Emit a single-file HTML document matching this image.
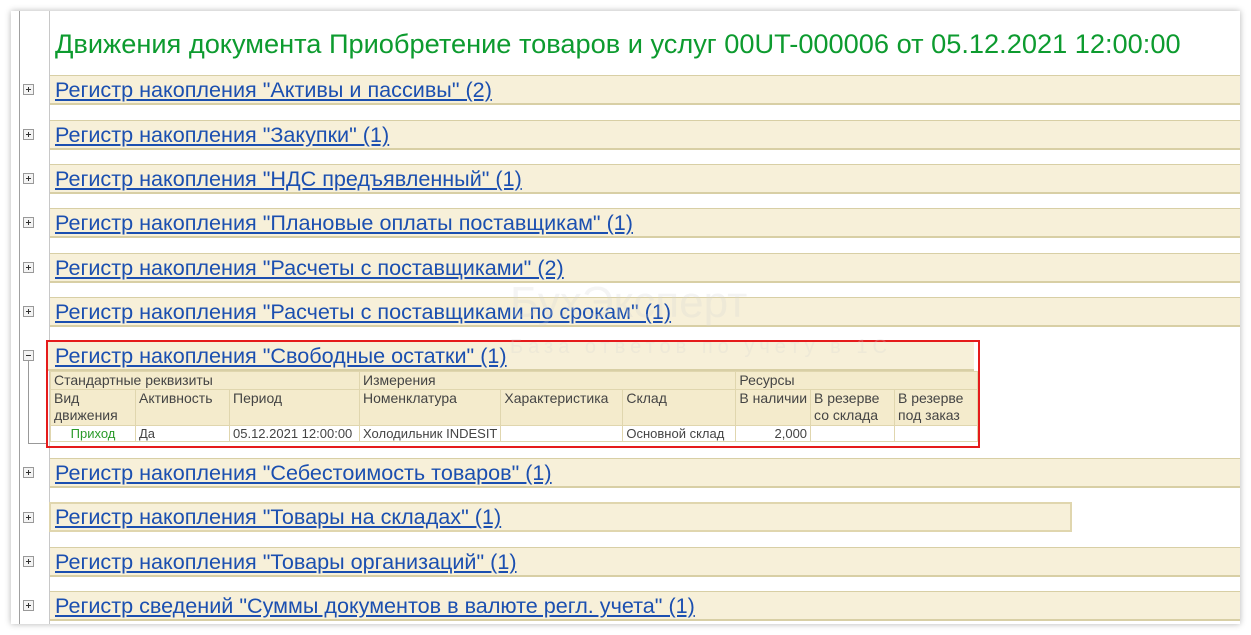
<!DOCTYPE html>
<html><head><meta charset="utf-8"><style>
body{margin:0;width:1251px;height:635px;background:#fff;position:relative;overflow:hidden;font-family:"Liberation Sans",Arial,sans-serif}
.frame{position:absolute;left:11px;top:11px;width:1229px;height:613px;background:#fff;box-shadow:0 0 6px rgba(0,0,0,.3)}
.vl{position:absolute;top:11px;width:1px;height:613px;background:#a0a0a0}
.title{position:absolute;left:55px;top:28px;font-size:27.2px;color:#0d9b2f;white-space:nowrap}
.bar{position:absolute;left:50px;width:1190px;height:27px;background:#f7f0d9;border-top:1px solid #d8cfa5;border-bottom:2px solid #d8cfa5}
.bar a{position:absolute;left:5px;top:1px;font-size:21.6px;color:#1b4fb0;text-decoration:underline;white-space:nowrap}
.pl{position:absolute;left:23px;width:9px;height:9px;border:1px solid #999;background:#f4f4f4;font-size:0}
.pl:before{content:"";position:absolute;left:2px;top:4px;width:5px;height:1px;background:#333}
.pl.p:after{content:"";position:absolute;left:4px;top:2px;width:1px;height:5px;background:#333}
.red{position:absolute;left:46px;top:340px;width:930px;height:104px;border:2px solid #e51b1b}
table{position:absolute;left:50px;top:371px;border-collapse:collapse;font-size:14px;color:#444;table-layout:fixed}
td{border:1px solid #e0d6ae;padding:0 3px;vertical-align:top;background:#f4ebcc;line-height:17px;white-space:nowrap;overflow:hidden}
tr.d td{background:#fff;height:15px;padding:0 3px;font-size:13px;line-height:15px}
.wm{position:absolute;color:rgba(210,210,210,.25);white-space:nowrap}
</style></head><body>
<div class="frame"></div>
<div class="vl" style="left:19px"></div>
<div class="vl" style="left:49px;background:#c8c8c8"></div>
<div class="title">Движения документа Приобретение товаров и услуг 00UT-000006 от 05.12.2021 12:00:00</div>

<div class="bar" style="top:75px"><a>Регистр накопления "Активы и пассивы" (2)</a></div><div class="pl p" style="top:84px"></div>
<div class="bar" style="top:120px"><a>Регистр накопления "Закупки" (1)</a></div><div class="pl p" style="top:129px"></div>
<div class="bar" style="top:164px"><a>Регистр накопления "НДС предъявленный" (1)</a></div><div class="pl p" style="top:173px"></div>
<div class="bar" style="top:208px"><a>Регистр накопления "Плановые оплаты поставщикам" (1)</a></div><div class="pl p" style="top:217px"></div>
<div class="bar" style="top:253px"><a>Регистр накопления "Расчеты с поставщиками" (2)</a></div><div class="pl p" style="top:262px"></div>
<div class="bar" style="top:297px"><a>Регистр накопления "Расчеты с поставщиками по срокам" (1)</a></div><div class="pl p" style="top:306px"></div>
<div class="bar" style="top:341px;width:926px;left:48px"><a style="left:7px">Регистр накопления "Свободные остатки" (1)</a></div><div class="pl" style="top:350px"></div>
<div style="position:absolute;left:28px;top:361px;width:1px;height:83px;background:#999"></div>
<div style="position:absolute;left:28px;top:443px;width:20px;height:1px;background:#999"></div>
<table>
<colgroup><col style="width:85px"><col style="width:94px"><col style="width:130px"><col style="width:140px"><col style="width:122px"><col style="width:113px"><col style="width:74px"><col style="width:84px"><col style="width:83px"></colgroup>
<tr><td colspan="3">Стандартные реквизиты</td><td colspan="3">Измерения</td><td colspan="3">Ресурсы</td></tr>
<tr style="height:36px"><td>Вид<br>движения</td><td>Активность</td><td>Период</td><td>Номенклатура</td><td>Характеристика</td><td>Склад</td><td>В наличии</td><td>В резерве<br>со склада</td><td>В резерве<br>под заказ</td></tr>
<tr class="d"><td style="color:#2a9a2a;text-align:center">Приход</td><td>Да</td><td>05.12.2021 12:00:00</td><td>Холодильник INDESIT</td><td></td><td>Основной склад</td><td style="text-align:right">2,000</td><td></td><td></td></tr>
</table>
<div class="red"></div>
<div class="wm" style="left:510px;top:278px;font-size:44px">БухЭксперт</div>
<div class="wm" style="left:510px;top:336px;font-size:20px;letter-spacing:5px">База ответов по учету в 1С</div>

<div class="bar" style="top:458px"><a>Регистр накопления "Себестоимость товаров" (1)</a></div><div class="pl p" style="top:467px"></div>
<div class="bar" style="top:502px;width:1019px;border:2px solid #e0d6ae;height:26px;left:49px"><a style="left:4px;top:0px">Регистр накопления "Товары на складах" (1)</a></div><div class="pl p" style="top:512px"></div>
<div class="bar" style="top:547px"><a>Регистр накопления "Товары организаций" (1)</a></div><div class="pl p" style="top:556px"></div>
<div class="bar" style="top:591px"><a>Регистр сведений "Суммы документов в валюте регл. учета" (1)</a></div><div class="pl p" style="top:600px"></div>
</body></html>
